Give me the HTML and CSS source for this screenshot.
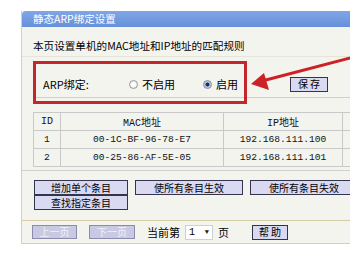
FILE: index.html
```html
<!DOCTYPE html>
<html lang="zh-CN">
<head>
    <meta charset="UTF-8">
    <meta name="viewport" content="width=device-width, initial-scale=1.0">
    <title>静态ARP绑定设置</title>
    <link rel="stylesheet" href="styles.css">
</head>
<body>
    <div class="page">
        <div class="panel">
            <div class="title">静态ARP绑定设置</div>
            <div class="desc">本页设置单机的MAC地址和IP地址的匹配规则</div>

            <!-- ARP switch -->
            <div class="arp-row">
                <span class="arp-label">ARP绑定:</span>
                <label class="opt opt-off"><input type="radio" name="arp">不启用</label>
                <label class="opt opt-on"><input type="radio" name="arp" checked>启用</label>
                <button class="btn btn-save">保 存</button>
            </div>

            <!-- Binding list -->
            <table class="rules">
                <thead>
                    <tr>
                        <th class="col-id">ID</th>
                        <th class="col-mac">MAC地址</th>
                        <th class="col-ip">IP地址</th>
                        <th class="col-more">&nbsp;</th>
                    </tr>
                </thead>
                <tbody>
                    <tr>
                        <td>1</td>
                        <td>00-1C-BF-96-78-E7</td>
                        <td>192.168.111.100</td>
                        <td>&nbsp;</td>
                    </tr>
                    <tr>
                        <td>2</td>
                        <td>00-25-86-AF-5E-05</td>
                        <td>192.168.111.101</td>
                        <td>&nbsp;</td>
                    </tr>
                </tbody>
            </table>

            <div class="actions">
                <div class="action-row">
                    <button class="btn btn-add">增加单个条目</button>
                    <button class="btn btn-all">使所有条目生效</button>
                    <button class="btn btn-all">使所有条目失效</button>
                </div>
                <div class="action-row">
                    <button class="btn btn-add">查找指定条目</button>
                </div>
            </div>

            <!-- Paging -->
            <div class="pager">
                <button class="btn btn-page" disabled>上一页</button>
                <button class="btn btn-page btn-next" disabled>下一页</button>
                <span class="pager-text">当前第</span>
                <span class="page-select">1<span class="caret">&#9660;</span></span>
                <span class="pager-unit">页</span>
                <button class="btn btn-help">帮 助</button>
            </div>
        </div>

        <!-- annotation over the screenshot -->
        <div class="mark-box"></div>
        <svg class="mark-arrow" width="350" height="255" viewBox="0 0 350 255">
            <line x1="354" y1="57" x2="262" y2="81" stroke="#cc2226" stroke-width="3" stroke-linecap="round"/>
            <polygon points="251,84 264,73 269,90" fill="#cc2226"/>
        </svg>
    </div>
</body>
</html>
```

FILE: styles.css
```css
body {
    margin: 0;
    background-color: #ffffff;
    font-family: 'Noto Sans CJK SC', 'Noto Sans', sans-serif;
    font-size: 11px;
    color: #000;
}

.page {
    position: relative;
    width: 350px;
    height: 255px;
    overflow: hidden;
}

.panel {
    margin: 11px 0 0 21px;
    width: 420px;
    background-color: #f4f4ef;
    border-left: 1px solid #d8cfb2;
    border-bottom: 1px solid #d8cfb2;
}

.title {
    height: 16px;
    line-height: 16px;
    padding-left: 11px;
    font-size: 10.5px;
    color: #ffffff;
    background: linear-gradient(#7fa6e6, #6690da);
    border-top-left-radius: 4px;
}

.desc {
    box-sizing: border-box;
    height: 30px;
    padding: 12px 0 0 11px;
    line-height: 14px;
    font-size: 10.6px;
    border-bottom: 1px solid #e6e3d8;
}

.arp-row {
    box-sizing: border-box;
    display: flex;
    align-items: center;
    height: 41px;
    margin-left: 11px;
    padding: 14px 0 0 10px;
    border-bottom: 1px solid #cfcfcf;
}

.arp-label {
    width: 86px;
    line-height: 14px;
}

.opt {
    display: flex;
    align-items: center;
    line-height: 14px;
}

.opt-off {
    width: 74px;
}

.opt-on {
    width: 87px;
}

.opt input {
    appearance: none;
    width: 9px;
    height: 9px;
    margin: 0 4px 0 0;
    border: 1px solid #9a9a9a;
    border-radius: 50%;
    background: radial-gradient(#ffffff 30%, #d9d9d9);
}

.opt input:checked {
    border-color: #7f8fa8;
    background: radial-gradient(#203050 35%, #a8b8d0 45%, #e0e6ee);
}

.btn {
    box-sizing: border-box;
    height: 15px;
    padding: 0;
    font-family: 'Noto Sans CJK SC', 'Noto Sans', sans-serif;
    font-size: 10px;
    line-height: 12px;
    color: #000;
    background-color: #d9d9f1;
    border: 1px solid #34344e;
    border-radius: 0;
}

.btn-save {
    width: 38px;
}

.rules {
    margin: 14px 0 0 11px;
    border-collapse: collapse;
    font-family: 'Liberation Mono', 'Noto Sans CJK SC', monospace;
    font-size: 9.6px;
    color: #111;
}

.rules th,
.rules td {
    height: 17px;
    padding: 0;
    text-align: center;
    font-weight: normal;
    border: 1px solid #c9c9c9;
}

.rules th {
    font-size: 10px;
}

.col-id {
    width: 26px;
}

.col-mac {
    width: 162px;
}

.col-ip {
    width: 118px;
}

.col-more {
    width: 70px;
}

.actions {
    margin-top: 3px;
    padding: 9px 0 0 12px;
    border-top: 1px solid #cfcfcf;
}

.action-row {
    display: flex;
    gap: 7px;
}

.btn-add {
    width: 94px;
}

.btn-all {
    width: 108px;
}

.pager {
    display: flex;
    align-items: center;
    height: 22px;
    margin-top: 10px;
    padding-left: 10px;
    border-top: 1px solid #d8cba4;
}

.btn-page {
    width: 45px;
    height: 14px;
    color: #f2f2fb;
    background-color: #c9c9e3;
    border-color: #8c8cac;
}

.btn-next {
    width: 46px;
    margin-left: 12px;
}

.pager-text {
    margin-left: 12px;
}

.page-select {
    display: flex;
    align-items: center;
    justify-content: space-between;
    box-sizing: border-box;
    width: 28px;
    height: 15px;
    margin-left: 5px;
    padding: 0 3px;
    font-family: 'Liberation Mono', monospace;
    font-size: 10px;
    background-color: #ffffff;
    border: 1px solid #d0d0d0;
}

.caret {
    font-size: 7px;
    color: #222;
}

.pager-unit {
    margin-left: 5px;
}

.btn-help {
    width: 36px;
    margin-left: 23px;
}

/* red highlight drawn on top */
.mark-box {
    position: absolute;
    left: 33px;
    top: 61px;
    width: 208px;
    height: 37px;
    border: 3px solid #c4262b;
}

.mark-arrow {
    position: absolute;
    left: 0;
    top: 0;
}
```
